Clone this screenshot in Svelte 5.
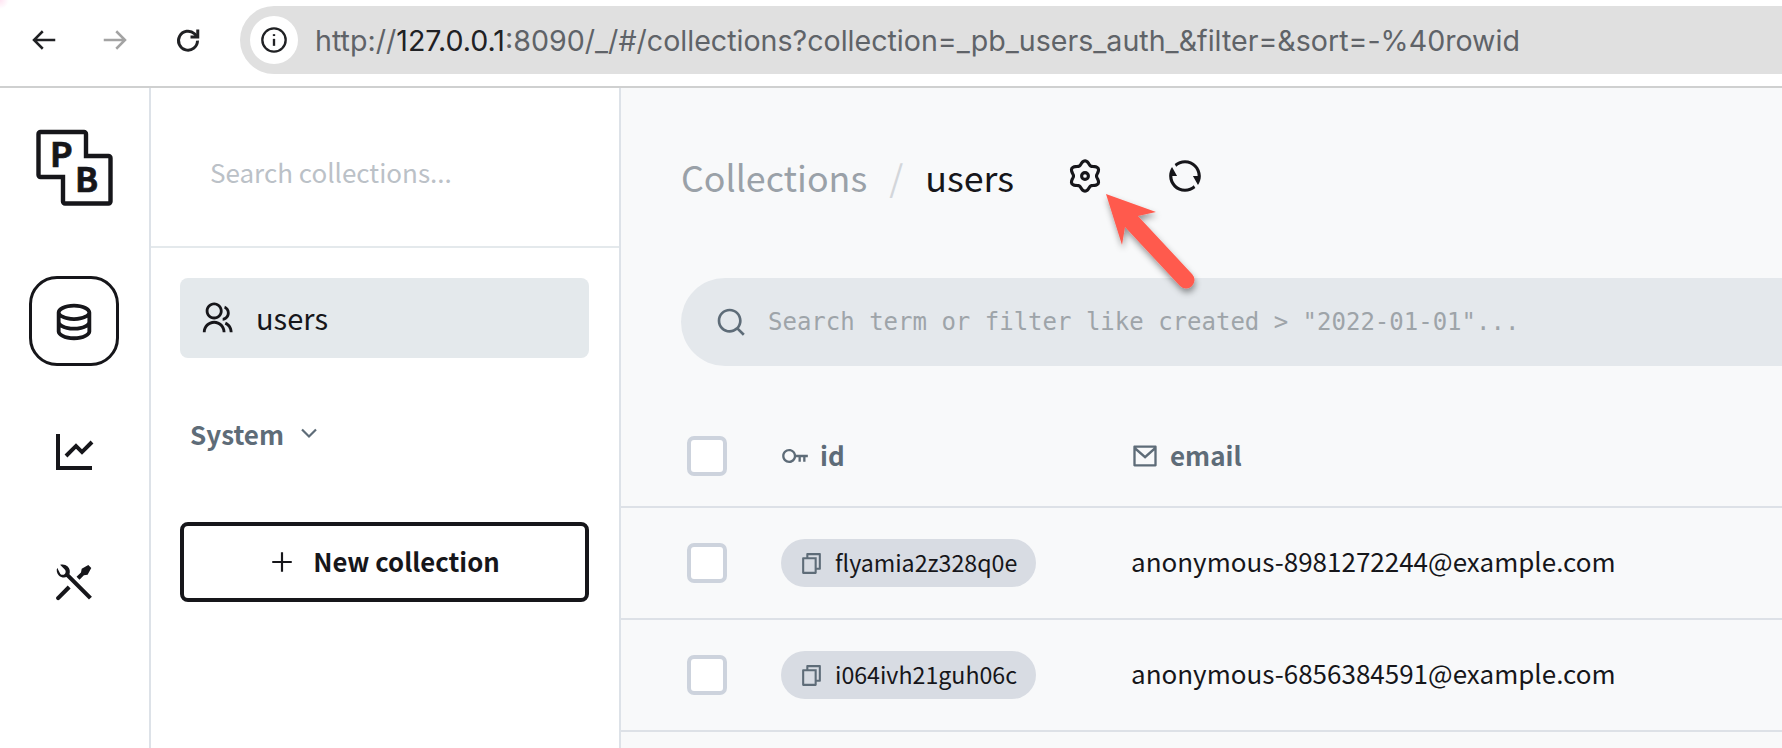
<script>
  const rows = [
    { id: 'flyamia2z328q0e', email: 'anonymous-8981272244@example.com' },
    { id: 'i064ivh21guh06c', email: 'anonymous-6856384591@example.com' }
  ];

  // six lobed outline of the settings icon
  function gearPath() {
    const pts = [];
    for (let i = 0; i < 72; i++) {
      const a = (i / 72) * Math.PI * 2;
      const r = 9.4 + 1.3 * Math.cos(6 * a);
      const x = 12 + r * Math.sin(a);
      const y = 12 - r * Math.cos(a);
      pts.push(`${x.toFixed(2)} ${y.toFixed(2)}`);
    }
    return 'M' + pts.join('L') + 'Z';
  }
</script>

<div class="page">
  <header class="toolbar">
    <svg class="nav" viewBox="0 0 24 24" width="30" height="30" fill="none" stroke="#202124" stroke-width="2"><path d="M21 12H4M11 5l-7 7 7 7" /></svg>
    <svg class="nav forward" viewBox="0 0 24 24" width="30" height="30" fill="none" stroke="#a3a3a3" stroke-width="2"><path d="M3 12h17M13 5l7 7-7 7" /></svg>
    <svg class="nav reload" viewBox="0 0 24 24" width="30" height="30" fill="none" stroke="#202124" stroke-width="2.4"><path d="M19.6 12.5a7.6 7.6 0 1 1-2.4-5.5L19 9" /><path d="M14 9.6h5.8V3.6" /></svg>
    <div class="omnibox">
      <span class="info">
        <svg viewBox="0 0 24 24" width="28" height="28" fill="none" stroke="#202124" stroke-width="2"><circle cx="12" cy="12" r="10" /><path d="M12 11v6" /><path d="M12 7v1.6" /></svg>
      </span>
      <span class="url">http://<b>127.0.0.1</b>:8090/_/#/collections?collection=_pb_users_auth_&amp;filter=&amp;sort=-%40rowid</span>
    </div>
  </header>

  <div class="shell">
    <nav class="rail">
      <div class="logo">
        <svg viewBox="0 0 80 80" width="80" height="80">
          <path d="M6.5 4H50a2 2 0 0 1 2 2V28H74.5a2 2 0 0 1 2 2V73.5a2 2 0 0 1-2 2H31a2 2 0 0 1-2-2V49H6.5a2 2 0 0 1-2-2V6a2 2 0 0 1 2-2Z" fill="#fff" stroke="#16161a" stroke-width="4.4" />
          <text x="16" y="39" class="mark">P</text>
          <text x="41" y="64" class="mark">B</text>
        </svg>
      </div>
      <div class="rail-btn active">
        <svg viewBox="0 0 24 24" width="46" height="46" fill="#16161a"><path d="M5 12.5C5 12.8134 5.46101 13.3584 6.53047 13.8931C7.91405 14.5849 9.87677 15 12 15C14.1232 15 16.0859 14.5849 17.4695 13.8931C18.539 13.3584 19 12.8134 19 12.5V10.3287C17.35 11.3482 14.8273 12 12 12C9.17273 12 6.64996 11.3482 5 10.3287V12.5ZM19 15.3287C17.35 16.3482 14.8273 17 12 17C9.17273 17 6.64996 16.3482 5 15.3287V17.5C5 17.8134 5.46101 18.3584 6.53047 18.8931C7.91405 19.5849 9.87677 20 12 20C14.1232 20 16.0859 19.5849 17.4695 18.8931C18.539 18.3584 19 17.8134 19 17.5V15.3287ZM3 17.5V7.5C3 5.01472 7.02944 3 12 3C16.9706 3 21 5.01472 21 7.5V17.5C21 19.9853 16.9706 22 12 22C7.02944 22 3 19.9853 3 17.5ZM12 10C14.1232 10 16.0859 9.58492 17.4695 8.89313C18.539 8.3584 19 7.81342 19 7.5C19 7.18658 18.539 6.6416 17.4695 6.10687C16.0859 5.41508 14.1232 5 12 5C9.87677 5 7.91405 5.41508 6.53047 6.10687C5.46101 6.6416 5 7.18658 5 7.5C5 7.81342 5.46101 8.3584 6.53047 8.89313C7.91405 9.58492 9.87677 10 12 10Z" /></svg>
      </div>
      <div class="rail-btn">
        <svg viewBox="0 0 24 24" width="48" height="48" fill="#16161a"><path d="M5 3V19H21V21H3V3H5ZM20.2929 6.29289L21.7071 7.70711L16 13.4142L13 10.415L8.70711 14.7071L7.29289 13.2929L13 7.58579L16 10.585L20.2929 6.29289Z" /></svg>
      </div>
      <div class="rail-btn">
        <svg viewBox="0 0 24 24" width="50" height="50" fill="#16161a"><path d="M5.32943 3.27158C6.56252 2.8332 7.99728 3.10749 8.9846 4.09481C9.97228 5.08249 10.2463 6.51795 9.80739 7.75133L20.6018 18.5457L19.1876 19.9599L8.39404 9.16638C7.16031 9.60579 5.7243 9.33197 4.73625 8.34392C3.74852 7.35619 3.47463 5.92052 3.91401 4.68702L5.44382 7.63107C6.02961 8.21686 6.97936 8.21686 7.56515 7.63107C8.15094 7.04528 8.15094 6.09553 7.56515 5.50974L5.32943 3.27158ZM15.6968 5.15588L18.8788 3.38811L20.293 4.80233L18.5252 7.98431L16.7574 8.33786L14.6361 10.4592L13.2219 9.04497L15.3432 6.92365L15.6968 5.15588ZM8.97852 13.2573L10.3927 14.6715L5.09 19.9742C4.69947 20.3648 4.06631 20.3648 3.67579 19.9742C3.31531 19.6137 3.28758 19.0465 3.59261 18.6542L3.67579 18.56L8.97852 13.2573Z" /></svg>
      </div>
    </nav>

    <aside class="sidebar">
      <div class="side-search">
        <input placeholder="Search collections..." />
      </div>
      <div class="side-body">
        <div class="side-item">
          <svg viewBox="0 0 24 24" width="34" height="34" fill="#16161a"><path d="M2 22C2 17.5817 5.58172 14 10 14C14.4183 14 18 17.5817 18 22H16C16 18.6863 13.3137 16 10 16C6.68629 16 4 18.6863 4 22H2ZM10 13C6.685 13 4 10.315 4 7C4 3.685 6.685 1 10 1C13.315 1 16 3.685 16 7C16 10.315 13.315 13 10 13ZM10 11C12.21 11 14 9.21 14 7C14 4.79 12.21 3 10 3C7.79 3 6 4.79 6 7C6 9.21 7.79 11 10 11ZM18.2837 14.7028C21.0644 15.9561 23 18.752 23 22H21C21 19.564 19.5483 17.4671 17.4628 16.5271L18.2837 14.7028ZM17.5962 3.41321C19.5944 4.23703 21 6.20361 21 8.5C21 11.3702 18.8042 13.7252 16 13.9776V11.9646C17.6967 11.7222 19 10.264 19 8.5C19 7.11935 18.2016 5.92603 17.041 5.35635L17.5962 3.41321Z" /></svg>
          <span>users</span>
        </div>
        <div class="side-group">
          <span>System</span>
          <svg viewBox="0 0 24 24" width="24" height="24" fill="none" stroke="#5e6c78" stroke-width="2.2"><path d="M5 8.5l7 7 7-7" /></svg>
        </div>
        <button class="new-btn">
          <svg viewBox="0 0 24 24" width="26" height="26" fill="#16161a"><path d="M11 11V3h2v8h8v2h-8v8h-2v-8H3v-2z" /></svg>
          <span>New collection</span>
        </button>
      </div>
    </aside>

    <main class="main">
      <div class="crumbs">
        <span class="muted">Collections</span>
        <span class="slash">/</span>
        <span class="current">users</span>
        <svg class="gear" viewBox="0 0 24 24" width="34" height="34" fill="none" stroke="#16161a" stroke-width="2.2"><path d={gearPath()} /><circle cx="12" cy="12" r="2.4" /></svg>
        <svg class="refresh" viewBox="0 0 24 24" width="38" height="38" fill="#16161a"><path d="M5.46257 4.43262C7.21556 2.91688 9.5007 2 12 2C17.5228 2 22 6.47715 22 12C22 14.1361 21.3302 16.1158 20.1892 17.7406L17 12H20C20 7.58172 16.4183 4 12 4C9.84982 4 7.89777 4.84827 6.46023 6.22842L5.46257 4.43262ZM18.5374 19.5674C16.7844 21.0831 14.4993 22 12 22C6.47715 22 2 17.5228 2 12C2 9.86386 2.66979 7.88416 3.8108 6.25944L7 12H4C4 16.4183 7.58172 20 12 20C14.1502 20 16.1022 19.1517 17.5398 17.7716L18.5374 19.5674Z" /></svg>
      </div>

      <div class="filter">
        <svg viewBox="0 0 24 24" width="32" height="32" fill="#5e6c78"><path d="M18.031 16.6168L22.3137 20.8995L20.8995 22.3137L16.6168 18.031C15.0769 19.263 13.124 20 11 20C6.032 20 2 15.968 2 11C2 6.032 6.032 2 11 2C15.968 2 20 6.032 20 11C20 13.124 19.263 15.0769 18.031 16.6168ZM16.0247 15.8748C17.2475 14.6146 18 12.8956 18 11C18 7.1325 14.8675 4 11 4C7.1325 4 4 7.1325 4 11C4 14.8675 7.1325 18 11 18C12.8956 18 14.6146 17.2475 15.8748 16.0247L16.0247 15.8748Z" /></svg>
        <input placeholder={'Search term or filter like created > "2022-01-01"...'} />
      </div>

      <div class="table">
        <div class="row head">
          <div><span class="check"></span></div>
          <div class="th">
            <svg viewBox="0 0 24 24" width="28" height="28" fill="#5e6c78"><path d="M12.917 13C12.441 15.8377 9.973 18 7 18C3.68629 18 1 15.3137 1 12C1 8.68629 3.68629 6 7 6C9.973 6 12.441 8.16229 12.917 11H23V13H21V17H19V13H17V17H15V13H12.917ZM7 16C9.20914 16 11 14.2091 11 12C11 9.79086 9.20914 8 7 8C4.79086 8 3 9.79086 3 12C3 14.2091 4.79086 16 7 16Z" /></svg>
            <span>id</span>
          </div>
          <div class="th">
            <svg viewBox="0 0 24 24" width="28" height="28" fill="#5e6c78"><path d="M3 3H21C21.5523 3 22 3.44772 22 4V20C22 20.5523 21.5523 21 21 21H3C2.44772 21 2 20.5523 2 20V4C2 3.44772 2.44772 3 3 3ZM20 7.23792L12.0718 14.338L4 7.21594V19H20V7.23792ZM4.51146 5L12.0619 11.662L19.501 5H4.51146Z" /></svg>
            <span>email</span>
          </div>
          <div><span class="stub dark"></span></div>
        </div>
        {#each rows as row}
          <div class="row">
            <div><span class="check"></span></div>
            <div>
              <span class="chip">
                <svg viewBox="0 0 24 24" width="25" height="25" fill="#5e6c78"><path d="M6.9998 6V3C6.9998 2.44772 7.44752 2 7.9998 2H19.9998C20.5521 2 20.9998 2.44772 20.9998 3V17C20.9998 17.5523 20.5521 18 19.9998 18H16.9998V20.9991C16.9998 21.5519 16.5499 22 15.993 22H4.00666C3.45059 22 3 21.5554 3 20.9991L3.0026 7.00087C3.0027 6.44811 3.45264 6 4.00942 6H6.9998ZM5.00242 8L5.00019 20H14.9998V8H5.00242ZM8.9998 6H16.9998V16H18.9998V4H8.9998V6Z" /></svg>
                <span>{row.id}</span>
              </span>
            </div>
            <div class="email">{row.email}</div>
            <div><span class="stub"></span></div>
          </div>
        {/each}
      </div>

      <svg class="arrow" viewBox="0 0 110 110" width="110" height="110">
        <defs>
          <filter id="arrow-shadow" x="-20%" y="-20%" width="150%" height="150%">
            <feDropShadow dx="1" dy="4" stdDeviation="3" flood-color="#000" flood-opacity="0.4" />
          </filter>
        </defs>
        <g filter="url(#arrow-shadow)">
          <path d="M25 27L80 86" stroke="#ff5a4e" stroke-width="17" stroke-linecap="round" fill="none" />
          <path d="M0 0L50 18L32 22L19 33L16 51Z" fill="#ff5a4e" />
        </g>
      </svg>
    </main>
  </div>
</div>

<style>
  :global(body) {
    margin: 0;
    background: #fff;
  }

  .page {
    width: 1782px;
    height: 748px;
    overflow: hidden;
    display: flex;
    flex-direction: column;
    font-family: "Noto Sans CJK SC", "Noto Sans", sans-serif;
    color: #16161a;
  }

  /* browser chrome */
  .toolbar {
    height: 88px;
    box-sizing: border-box;
    flex: none;
    display: flex;
    align-items: flex-start;
    background: radial-gradient(circle at 0 0, #ffe3f2 0, #fff 9px);
    border-bottom: 2px solid #cfd0d0;
    padding-left: 29px;
    padding-top: 6px;
  }
  .nav {
    flex: none;
    margin-top: 19px;
  }
  .forward {
    margin-left: 41px;
  }
  .reload {
    margin-left: 43px;
  }
  .omnibox {
    margin-left: 37px;
    flex: 1;
    height: 68px;
    background: #e0e0e0;
    border-radius: 34px 0 0 34px;
    display: flex;
    align-items: center;
    padding-left: 10px;
  }
  .info {
    width: 48px;
    height: 48px;
    border-radius: 50%;
    background: #fff;
    display: flex;
    align-items: center;
    justify-content: center;
  }
  .url {
    margin-left: 17px;
    font-family: Inter, Roboto, sans-serif;
    font-size: 28.6px;
    color: #5f6368;
    white-space: nowrap;
  }
  .url b {
    font-weight: 400;
    color: #202124;
  }

  .shell {
    flex: 1;
    display: flex;
    min-height: 0;
  }

  /* icon rail */
  .rail {
    width: 151px;
    flex: none;
    box-sizing: border-box;
    padding-right: 1px;
    border-right: 2px solid #dde2e8;
    display: flex;
    flex-direction: column;
    align-items: center;
  }
  .logo {
    margin-top: 40px;
    height: 80px;
    margin-bottom: 68px;
  }
  .logo svg {
    overflow: visible;
  }
  .mark {
    font-size: 34px;
    font-weight: 700;
    fill: #16161a;
    stroke: #16161a;
    stroke-width: 0.7;
    font-family: "Noto Sans CJK SC", sans-serif;
  }
  .rail-btn {
    width: 90px;
    height: 90px;
    flex: none;
    box-sizing: border-box;
    border-radius: 28px;
    border: 3px solid transparent;
    display: flex;
    align-items: center;
    justify-content: center;
    margin-bottom: 41px;
  }
  .rail-btn.active {
    border-color: #16161a;
  }

  /* collections sidebar */
  .sidebar {
    width: 470px;
    box-sizing: border-box;
    flex: none;
    border-right: 2px solid #dde2e8;
  }
  .side-search {
    height: 160px;
    box-sizing: border-box;
    border-bottom: 2px solid #e4e9ec;
    display: flex;
    align-items: center;
    padding-left: 59px;
    padding-top: 8px;
  }
  .side-search input {
    border: 0;
    outline: 0;
    background: none;
    padding: 0;
    width: 360px;
    font: inherit;
    font-size: 26px;
  }
  .side-search input::placeholder {
    color: #bbc1c7;
  }
  .side-body {
    padding: 30px 30px 0 29px;
  }
  .side-item {
    height: 80px;
    border-radius: 8px;
    background: #e4e9ec;
    display: flex;
    align-items: center;
    gap: 22px;
    padding-left: 20px;
    font-size: 29px;
  }
  .side-item span {
    padding-bottom: 3px;
  }
  .side-group {
    height: 44px;
    margin-top: 53px;
    padding-left: 10px;
    display: flex;
    align-items: center;
    gap: 13px;
    color: #5e6c78;
    font-size: 26px;
    font-weight: 700;
  }
  .new-btn {
    width: 100%;
    height: 80px;
    margin-top: 67px;
    box-sizing: border-box;
    background: #fff;
    border: 4px solid #16161a;
    border-radius: 8px;
    display: flex;
    align-items: center;
    justify-content: center;
    gap: 18px;
    font: inherit;
    font-size: 25.7px;
    font-weight: 700;
    color: #16161a;
    padding: 0;
  }
  .new-btn span {
    padding-bottom: 3px;
  }

  /* main column */
  .main {
    flex: 1;
    min-width: 0;
    position: relative;
    background: #f8f9fa;
    overflow: hidden;
  }
  .crumbs {
    height: 64px;
    margin-top: 56px;
    padding-left: 60px;
    display: flex;
    align-items: center;
    font-size: 35.8px;
    white-space: nowrap;
  }
  .muted {
    color: #9aa1a8;
  }
  .slash {
    color: #d3d6da;
    margin: 0 22px;
  }
  .gear {
    margin-left: 54px;
  }
  .refresh {
    margin-left: 64px;
  }
  .filter {
    height: 88px;
    margin: 70px 0 0 60px;
    background: #e4e8ec;
    border-radius: 44px 0 0 44px;
    display: flex;
    align-items: center;
    padding-left: 34px;
    gap: 21px;
  }
  .filter input {
    flex: 1;
    border: 0;
    outline: 0;
    background: none;
    padding: 0;
    font-family: "DejaVu Sans Mono", monospace;
    font-size: 24px;
  }
  .filter input::placeholder {
    color: #9ea4a9;
  }
  .table {
    margin-top: 30px;
  }
  .row {
    height: 112px;
    box-sizing: border-box;
    border-bottom: 2px solid #dde1e7;
    display: grid;
    grid-template-columns: 160px 350px 650px 200px;
    align-items: center;
    font-size: 26px;
    white-space: nowrap;
  }
  .row > div:first-child {
    padding-left: 66px;
  }
  .head {
    padding-top: 10px;
  }
  .check {
    display: block;
    width: 40px;
    height: 40px;
    box-sizing: border-box;
    background: #fff;
    border: 4px solid #cdd3dd;
    border-radius: 7px;
  }
  .th {
    display: flex;
    align-items: center;
    gap: 11px;
    color: #5e6c78;
    font-weight: 700;
    font-size: 26px;
  }
  .th span {
    padding-bottom: 3px;
  }
  .chip {
    display: inline-flex;
    align-items: center;
    height: 48px;
    border-radius: 24px;
    background: #d8dce3;
    padding: 0 19px 0 18px;
    gap: 11px;
    font-size: 23.2px;
  }
  .chip span {
    padding-bottom: 2px;
  }
  .email {
    padding-bottom: 5px;
  }
  .stub {
    display: block;
    width: 20px;
    height: 40px;
    border-radius: 12px;
    background: #d8dce3;
    margin-left: 1px;
  }
  .stub.dark {
    background: #5e6c78;
    height: 12px;
    width: 12px;
    border-radius: 50%;
  }

  /* annotation drawn over the page */
  .arrow {
    position: absolute;
    left: 485px;
    top: 106px;
    overflow: visible;
  }
</style>
